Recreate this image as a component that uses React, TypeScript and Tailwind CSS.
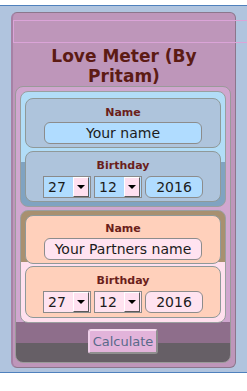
import React from 'react';

const FakeSelect = ({ value, bg }: { value: string; bg: string }) => (
  <div className={`flex h-[22px] w-[48px] items-center justify-between border border-[#8a8a8a] pl-[4px] pr-px ${bg}`}>
    <span className="leading-[20px]">{value}</span>
    <span className="flex h-[20px] w-[16px] items-center justify-center border border-t-white border-l-white border-r-[#5a5a5a] border-b-[#5a5a5a] bg-[#ffe0f0]">
      <svg width="8" height="4" viewBox="0 0 8 4">
        <polygon points="0,0 8,0 4,4" fill="#000" />
      </svg>
    </span>
  </div>
);

const PersonBlock = ({
  placeholder,
  outer,
  box,
  field,
  topPad,
}: {
  placeholder: string;
  outer: string;
  box: string;
  field: string;
  topPad: string;
}) => (
  <div className={`flex flex-col rounded-lg border border-[#9a9f9f] px-[4px] pb-[4px] ${topPad} ${outer}`}>
    {/* name */}
    <div className={`flex flex-col items-center rounded-lg border border-[#8f9999] pb-[3px] ${box} ${topPad === 'pt-[6px]' ? 'pt-[6px]' : 'pt-[5px]'}`}>
      <div className="text-[11px] font-bold leading-[15px] text-[#6b1f1b]">Name</div>
      <div className={`mt-[2px] flex h-[22px] w-[158px] items-center justify-center rounded-md border border-[#8c8c8c] text-[14px] text-[#1c1c1c] ${field}`}>
        {placeholder}
      </div>
    </div>
    {/* birthday */}
    <div className={`flex flex-col items-center rounded-lg border border-[#8f9999] pt-[6px] ${box} ${topPad === 'pt-[6px]' ? 'mt-[3px] pb-[3px]' : 'mt-[2px] pb-[4px]'}`}>
      <div className="text-[11px] font-bold leading-[15px] text-[#6b1f1b]">Birthday</div>
      <div className="mt-[3px] flex gap-[3px] text-[14px] text-[#1c1c1c]">
        <FakeSelect value="27" bg={field} />
        <FakeSelect value="12" bg={field} />
        <div className={`flex h-[22px] w-[58px] items-center justify-center rounded-md border border-[#8c8c8c] ${field}`}>
          2016
        </div>
      </div>
    </div>
  </div>
);

export default function App() {
  return (
    <div className="min-h-screen bg-white pt-[5px] font-['DejaVu_Sans',Verdana,sans-serif]">
      <div className="h-[368px] overflow-hidden border-y border-[#4f81bd] bg-[#b0c4de] pl-[11px] pt-[6px]">
        <div className="h-[356px] w-[225px] rounded-md border border-l-2 border-[#8c768c] border-l-[#a681a5] bg-[#be96ba] pt-[7px]">
          <div className="h-[23px] w-[240px] border border-[#dba4d8]" />
          <h1 className="mt-[3px] text-center text-[17px] font-bold leading-5 text-[#5c1b14]">
            Love Meter (By Pritam)
          </h1>

          <div className="ml-[2px] flex w-[216px] flex-col rounded-lg border border-[#9a9a9a] bg-[linear-gradient(#d0a7cf_0_235px,#8e6e8b_235px_256px,#665f66_256px)] px-[4px] pt-[4px] pb-[8px]">
            <PersonBlock
              placeholder="Your name"
              outer="bg-[linear-gradient(#b2ddf7_0_70px,#80a3c1_70px)]"
              box="bg-[#aec4dc]"
              field="bg-[#b0dcff]"
              topPad="pt-[6px]"
            />
            <div className="mt-[3px]">
              <PersonBlock
                placeholder="Your Partners name"
                outer="bg-[linear-gradient(#a89070_0_51px,#ffe0ee_51px)]"
                box="bg-[#ffd0bb]"
                field="bg-[#ffe3f0]"
                topPad="pt-[4px]"
              />
            </div>
            <button
              type="button"
              className="mx-auto mt-[6px] h-[25px] w-[70px] rounded-[3px] border-2 border-t-[#f6dcf0] border-l-[#f0d0ea] border-r-[#8f8f8f] border-b-[#8f8f8f] bg-[#e2b3da] text-[13px] leading-[19px] text-[#596a8a]"
            >
              Calculate
            </button>
          </div>
        </div>
      </div>
    </div>
  );
}
